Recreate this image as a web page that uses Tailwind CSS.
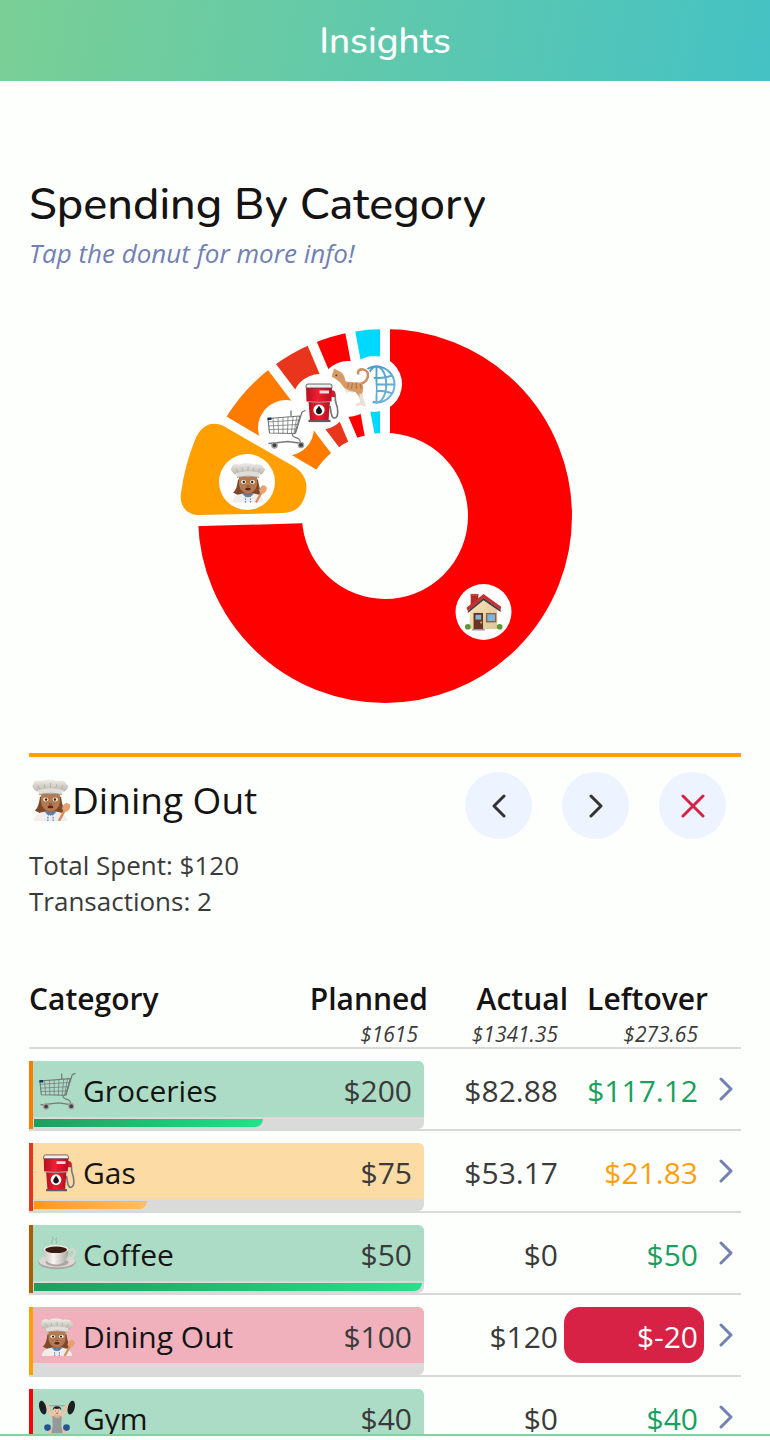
<!DOCTYPE html>
<html lang="en">
<head>
<meta charset="utf-8">
<meta name="viewport" content="width=device-width, initial-scale=1">
<title>Insights</title>
<script src="https://cdn.jsdelivr.net/npm/@tailwindcss/browser@4"></script>
</head>
<body class="flex h-screen flex-col bg-[#fdfffc] font-['Open_Sans',sans-serif] text-[#3a3a3a]">

<!-- Shared category pictures, each on a 40x40 grid -->
<svg class="absolute size-0" aria-hidden="true">
  <defs>
    <linearGradient id="gRed" x1="0" x2="1" y1="0" y2="0"><stop offset="0" stop-color="#b5101f"/><stop offset=".45" stop-color="#f01f31"/><stop offset="1" stop-color="#b5101f"/></linearGradient>
    <linearGradient id="gHat" x1="0" x2="0" y1="0" y2="1"><stop offset="0" stop-color="#f0eeea"/><stop offset="1" stop-color="#b9b5ae"/></linearGradient>
    <linearGradient id="gCup" x1="0" x2="1" y1="0" y2="0"><stop offset="0" stop-color="#c9c4be"/><stop offset=".4" stop-color="#f7f5f2"/><stop offset="1" stop-color="#aaa49d"/></linearGradient>
    <linearGradient id="gWall" x1="0" x2="1" y1="0" y2="1"><stop offset="0" stop-color="#f9e6b8"/><stop offset="1" stop-color="#dcc79a"/></linearGradient>
    <linearGradient id="gGlobe" gradientUnits="userSpaceOnUse" x1="0" x2="40" y1="0" y2="40"><stop offset="0" stop-color="#3f97c9"/><stop offset="1" stop-color="#76b8dc"/></linearGradient>
    <symbol id="cart" viewBox="0 0 40 40">
      <g fill="none" stroke="#77797a" stroke-linejoin="round" stroke-linecap="round">
        <path d="M2 9.500 34 7 29 24.500 3.500 24Z" stroke-width="1.200"/>
        <path d="M2.300 13 33 11M2.600 17 32 15.500M3 20.500 30.600 20M7 9.200 8 24M12 8.800 12.500 24M17 8.400V24.200M22 8 21.500 24.300M27 7.600 25.500 24.400M31 7.300 28 24.500" stroke-width=".8"/>
        <path d="M39 1.500 36 3 29.500 24M26.500 25C25 30 36 27 34 34M3 34.500 22 32.500 36 34.500M25 2V7" stroke-width="1.300"/>
      </g>
      <path d="M1.500 8.500h4v2.500h-4z" fill="#14365c"/>
      <g fill="#444" stroke="#a6a3a3" stroke-width="1.300"><circle cx="8.500" cy="36.300" r="2.700"/><circle cx="35" cy="36" r="2.700"/></g>
    </symbol>
    <symbol id="gas" viewBox="0 0 40 40">
      <path d="M33 8c4 2 1 7 3 12s3 14-1 15-4-7-5-12" fill="none" stroke="#77777b" stroke-width="1.700"/>
      <path d="M31 6.500 35 9v5h-4z" fill="#d21b2d"/>
      <path d="M8.500 18h21.500l-1.500 20H10z" fill="url(#gRed)"/>
      <path d="M6 4h26l-.5 14.500q-12 1-25 0z" fill="url(#gRed)"/>
      <path d="M6 3q0-2 2-2h22q2 0 2 2v2H6z" fill="#f3eef0" stroke="#4b4144" stroke-width=".8"/>
      <path d="M19.500 7.500H29v3h-9.500z" fill="#f6dbe0"/>
      <path d="M6.700 18.500q12 1.500 24.500 0" fill="none" stroke="#a3a0a3" stroke-width="1.200"/>
      <circle cx="19" cy="27" r="5.600" fill="#fff"/>
      <path d="M19 22.500c1 2.500 3.300 3.500 3 6-.5 3.500-5.500 3.500-6 0-.3-2.500 2-3.500 3-6Z" fill="#151515"/>
      <path d="M8.500 36.800h22v2.300h-22z" fill="#5f5b60"/>
    </symbol>
    <symbol id="chef" viewBox="0 0 40 40">
      <path d="M10 17C9 24 8 28 5 30q6 4 15 4t15-4c-3-2-4-6-5-13Z" fill="#7f4929"/>
      <path d="M4 40q1-8 11-9h10q10 1 11 9Z" fill="#efeeec"/>
      <path d="M16 26h8v6l-4 3-4-3z" fill="#9c6642"/>
      <path d="M11 14h18v8q-1 8-9 9-8-1-9-9Z" fill="#b27a53"/>
      <path d="M7 12C4 10 1 6 4 5 3 1 9 1 12 2c3-2 10-2 14 0 5-1 9 0 9 3 4 1 1 5-2 7Q20 8 7 12Z" fill="url(#gHat)"/>
      <path d="M10 10 8 6M15 9l-1-4M20 9V4M25 9l1-4M30 10l2-4" fill="none" stroke="#aaa69f" stroke-width=".7"/>
      <path d="M8 10.500Q20 7 32 10.500l-1 4.500Q20 12 9 15Z" fill="#e0ddd8"/>
      <path d="M9 15Q20 12 31 15" fill="none" stroke="#98938b" stroke-width=".8"/>
      <g fill="#fff4d8"><ellipse cx="15.500" cy="19.500" rx="2.500" ry="1.900"/><ellipse cx="24.500" cy="19.500" rx="2.500" ry="1.900"/></g>
      <g fill="#30221a"><circle cx="15.800" cy="19.500" r="1.200"/><circle cx="24.200" cy="19.500" r="1.200"/></g>
      <path d="M18.500 23.500q1.500 1 3 0" fill="none" stroke="#7d482e"/>
      <ellipse cx="20" cy="26.600" rx="2.800" ry="1.300" fill="#5d2323"/>
      <path d="M15 31l3 3 2-2 2 2 3-3" fill="none" stroke="#4d86cb" stroke-width="1.500"/>
      <path d="M17.500 36v4M22.500 36v4" stroke="#5d91cd" stroke-width="1.300" stroke-dasharray="1.500 1"/>
      <path d="m34 29-6 11" stroke="#d98e5c" stroke-width="2.400"/>
      <ellipse cx="35" cy="27" rx="3.400" ry="4.200" transform="rotate(35 35 27)" fill="#e8a271"/>
    </symbol>
    <symbol id="coffee" viewBox="0 0 40 40">
      <path d="M15 8c-3-3 3-4 0-7M19 8c3-3-3-4 1-6" fill="none" stroke="#9fb9ae" stroke-width="1.200"/>
      <ellipse cx="20" cy="27.500" rx="19.500" ry="7.500" fill="#aaa59f"/>
      <ellipse cx="20" cy="26.300" rx="19" ry="6.800" fill="#dcd8d3"/>
      <ellipse cx="20" cy="27.500" rx="12" ry="4.500" fill="#aca7a2"/>
      <path d="M31 15c8-3 9 1 7 5s-6 5-10 4" fill="none" stroke="#d9d5d0" stroke-width="2"/>
      <path d="M6 14c0 11 4 16 13 16s13-5 13-16Z" fill="url(#gCup)"/>
      <ellipse cx="19" cy="14" rx="13" ry="4.500" fill="#eeeae6"/>
      <ellipse cx="19" cy="14.500" rx="11.500" ry="3.500" fill="#3b1c12"/>
    </symbol>
    <symbol id="gym" viewBox="0 0 40 40">
      <path d="M5 6h30" stroke="#9b9b9b" stroke-width="1.200"/>
      <g fill="#1c1f21"><ellipse cx="5" cy="8" rx="3.600" ry="7.500" transform="rotate(-14 5 8)"/><ellipse cx="35" cy="8" rx="3.600" ry="7.500" transform="rotate(14 35 8)"/></g>
      <path d="M10 6l3 8 4 5M30 6l-3 8-4 5" fill="none" stroke="#efc2a5" stroke-width="3.200" stroke-linecap="round" stroke-linejoin="round"/>
      <path d="M14 29 11 38M26 29l3 9" fill="none" stroke="#edbea0" stroke-width="3.200"/>
      <path d="M15 17h10l-.5 10 1.500 8H14l1.500-8z" fill="#96999c"/>
      <path d="M17 15h6v3q-3 2-6 0z" fill="#e4b18f"/>
      <circle cx="20" cy="11.500" r="4.300" fill="#f2c9ae"/>
      <path d="M15.500 11q0-4.500 4.500-4.500t4.500 4.500l-1.500-2q-3 1-6 0Z" fill="#25201f"/>
      <path d="M18 11.500h.8M21.300 11.500h.8M18.800 14h2.500" stroke="#60392d" stroke-width=".8"/>
      <g fill="#245590"><circle cx="10" cy="29" r="3.500"/><circle cx="30" cy="29" r="3.500"/></g>
      <path d="M9 37h5M26 37h5" stroke="#e8e8e8" stroke-width="2.500"/>
    </symbol>
    <symbol id="house" viewBox="0 0 40 40">
      <path d="M6 1h8v16H6z" fill="#a92d29"/><path d="M6 1h8v2H6z" fill="#c7423a"/>
      <path d="M5 17 20 4l14 12v22H5z" fill="url(#gWall)"/>
      <path d="M1.500 15.500 19.500 1 38 14.500l-.5 3.500L19.500 5 3 19Z" fill="#c92e32"/>
      <path d="M3 19 19.500 5 37.500 18v2L19.500 7.500 3 21Z" fill="#43383a"/>
      <path d="M9 21h10v17H9z" fill="#6b3324"/><path d="M11 23h6v5h-6z" fill="#7fb9dd"/><circle cx="17" cy="31" r="1" fill="#e1c165"/>
      <path d="M22 21h11v10H22z" fill="#8a6647"/><path d="M23.500 22.500h8v7h-8z" fill="#78b4e4"/>
      <g fill="#5b9a34"><circle cx="3" cy="35.500" r="3"/><circle cx="36.500" cy="35.500" r="3"/></g>
      <path d="M8 38h13v1.500H7z" fill="#999"/>
    </symbol>
    <symbol id="cat" viewBox="0 0 40 40">
      <path d="M31 17C41 14 41 3 34 2c-4-.5-6 2-5 4" fill="none" stroke="#cf915f" stroke-width="2.600" stroke-linecap="round"/>
      <path d="M2 9C2 6 4 4 4 1l4 2 4 2c3 3 3 6 4 9 6 2 12 0 16 2 4 3 1 9 1 12l2 8-3 3-2-9-4-5-9-1-1 9-3 5-2-1 2-13c-3-2-4-6-5-9-3 0-6-1-6-5Z" fill="#d79b68"/>
      <path d="M11 17c1 4 1 6 4 8l-2 13 3 1 2-14 9 1c-6-2-12-3-16-9ZM30 27l1 8-5 3 1 2 6-2 1 2h3l-4-13Z" fill="#e9dfd5"/>
      <path d="M19 16l-1 5M23 16l-1 6M27 16v6M31 17l1 5" fill="none" stroke="#b2743f" stroke-width="1.200"/>
      <circle cx="6.500" cy="8" r=".9" fill="#333"/>
    </symbol>
    <symbol id="globe" viewBox="0 0 40 40">
      <g fill="none" stroke="url(#gGlobe)" stroke-width="2"><circle cx="20" cy="20" r="18.500"/><ellipse cx="20" cy="20" rx="10" ry="18.500"/><path d="M20 1.500v37M1.500 20h37.100M4 11q16 5 32 0M4 29q16-5 32 0"/></g>
    </symbol>
    <symbol id="chevron" viewBox="0 0 14 24"><path d="M2 2 12 12 2 22" fill="none" stroke="currentColor" stroke-width="3" stroke-linecap="round" stroke-linejoin="round"/></symbol>
  </defs>
</svg>

<header class="flex h-[81px] shrink-0 items-center justify-center bg-[linear-gradient(100deg,#7acf95,#45c2c4)]">
  <h1 class="font-[Nunito,'Open_Sans',sans-serif] text-[37px] leading-[48px] font-medium text-white">Insights</h1>
</header>

<main class="min-h-0 flex-1 overflow-y-auto px-[29px] pt-[96px] [scrollbar-width:none]">
  <h2 class="font-[Nunito,'Open_Sans',sans-serif] text-[45px] leading-[56px] font-medium text-[#151313]">Spending By Category</h2>
  <p class="text-[26px] leading-[40px] text-[#7280b4] italic">Tap the donut for more info!</p>

  <svg class="mx-auto mt-[43px] block h-[400px] w-[430px] max-w-full" viewBox="-215 -200 430 400" role="img" aria-label="Spending by category donut chart">
    <g fill="none" stroke-width="104" transform="rotate(-90)">
      <circle r="135" pathLength="360" stroke="#ff0000" stroke-dasharray="268.400 360"/>
      <circle r="135" pathLength="360" stroke="#ff7b00" stroke-dasharray="22.200 360" stroke-dashoffset="-300.600"/>
      <circle r="135" pathLength="360" stroke="#e8351b" stroke-dasharray="14.300 360" stroke-dashoffset="-322.800"/>
      <circle r="135" pathLength="360" stroke="#ff0000" stroke-dasharray="12.200 360" stroke-dashoffset="-337.100"/>
      <circle r="135" pathLength="360" stroke="#00d9ff" stroke-dasharray="10.700 360" stroke-dashoffset="-349.300"/>
    </g>
    <g stroke="#fdfffc" stroke-width="10">
      <path d="M0-75V-192"/>
      <path d="M0-75V-192" transform="rotate(268.400)"/>
      <path d="M0-75V-192" transform="rotate(300.600)"/>
      <path d="M0-75V-192" transform="rotate(322.800)"/>
      <path d="M0-75V-192" transform="rotate(337.100)"/>
      <path d="M0-75V-192" transform="rotate(349.300)"/>
    </g>
    <circle cx="98.500" cy="96" r="28" fill="#fff"/><use href="#house" x="80" y="77" width="38" height="38"/>
    <circle cx="-11" cy="-132" r="28" fill="#fff"/><use href="#globe" x="-28" y="-151" width="39" height="39"/>
    <circle cx="-37" cy="-127" r="28" fill="#fff"/><use href="#cat" x="-55" y="-149" width="39" height="40"/>
    <circle cx="-65" cy="-114" r="28" fill="#fff"/><circle cx="-99" cy="-88" r="28" fill="#fff"/>
    <use href="#gas" x="-85" y="-133" width="40" height="40"/><use href="#cart" x="-119" y="-107" width="40" height="40"/>
    <path fill="#ff9f00" d="M-158-88-92-50C-80-43-76-32-80-20-84-8-90-4-102-3L-186-1C-199-1-206-11-204-23Q-200-52-190-76C-184-91-172-97-158-88Z"/>
    <circle cx="-138" cy="-34" r="28" fill="#fff"/><use href="#chef" x="-157" y="-54" width="40" height="41"/>
  </svg>

  <section class="mt-[37px] border-t-4 border-[#ff9f00] pt-[15px]">
    <div class="flex items-start justify-between pr-[15px]">
      <h3 class="flex items-center text-[37px] leading-[56px] text-[#151313]"><svg class="h-[42px] w-[43px]" aria-hidden="true"><use href="#chef"/></svg>Dining Out</h3>
      <div class="flex gap-[30px]">
        <button type="button" aria-label="Previous" class="flex size-[67px] items-center justify-center rounded-full bg-[#eef4ff] text-[#333]"><svg class="h-6 w-[14px] rotate-180"><use href="#chevron"/></svg></button>
        <button type="button" aria-label="Next" class="flex size-[67px] items-center justify-center rounded-full bg-[#eef4ff] text-[#333]"><svg class="h-6 w-[14px]"><use href="#chevron"/></svg></button>
        <button type="button" aria-label="Close" class="flex size-[67px] items-center justify-center rounded-full bg-[#eef4ff] text-[#d72245]"><svg class="size-6" viewBox="0 0 24 24"><path d="M2 2 22 22M22 2 2 22" fill="none" stroke="currentColor" stroke-width="3" stroke-linecap="round"/></svg></button>
      </div>
    </div>
    <div class="mt-2 text-[26px] leading-[36px]"><p>Total Spent: $120</p><p>Transactions: 2</p></div>
  </section>

  <table class="mt-[62px] w-full table-fixed border-collapse text-right text-[30px] leading-[52px]">
    <colgroup><col><col class="w-[140px]"><col class="w-[140px]"><col class="w-[140px]"><col class="w-[37px]"></colgroup>
    <thead class="text-[30px] leading-[36px] text-[#151313]">
      <tr class="border-b-2 border-[#d9d9d9] align-top">
        <th scope="col" class="text-left font-semibold">Category</th>
        <th scope="col" class="font-semibold"><div class="-mr-1">Planned</div><div class="h-[30px] pr-[6px] text-[21px] leading-[34px] font-normal text-[#3a3a3a] italic">$1615</div></th>
        <th scope="col" class="font-semibold"><div class="-mr-1">Actual</div><div class="h-[30px] pr-[6px] text-[21px] leading-[34px] font-normal text-[#3a3a3a] italic">$1341.35</div></th>
        <th scope="col" class="font-semibold"><div class="-mr-1">Leftover</div><div class="h-[30px] pr-[6px] text-[21px] leading-[34px] font-normal text-[#3a3a3a] italic">$273.65</div></th>
        <td></td>
      </tr>
    </thead>
    <tbody>
      <tr class="border-b-2 border-[#d9d9d9] align-top">
        <td colspan="2" class="pt-3"><div class="overflow-hidden rounded-r-md border-l-4 border-[#ff7b00] bg-[#dadada]">
          <div class="flex items-center bg-[#acdcc5] pt-1 pr-3 pl-1"><svg class="mr-[6px] h-[38px] w-10" aria-hidden="true"><use href="#cart"/></svg><span class="flex-1 text-left text-[#151313]">Groceries</span><span>$200</span></div>
          <div class="h-3 pt-[2px] pr-[2px] pl-px"><div class="h-2 rounded-br-lg bg-linear-to-r from-[#1b9f5e] to-[#27e08a]" style="width:59%"></div></div></div></td>
        <td class="pt-4 pr-[6px]">$82.88</td>
        <td class="pt-4 pr-[6px] text-[#1b9f5e]">$117.12</td>
        <td class="pt-3"><a href="#groceries" aria-label="Groceries details" class="flex h-14 items-center justify-center text-[#7280b4]"><svg class="mr-[-6px] h-6 w-[14px]"><use href="#chevron"/></svg></a></td>
      </tr>
      <tr class="border-b-2 border-[#d9d9d9] align-top">
        <td colspan="2" class="pt-3"><div class="overflow-hidden rounded-r-md border-l-4 border-[#e8351b] bg-[#dadada]">
          <div class="flex items-center bg-[#fddba5] pt-1 pr-3 pl-1"><svg class="mr-[6px] h-[38px] w-10" aria-hidden="true"><use href="#gas"/></svg><span class="flex-1 text-left text-[#151313]">Gas</span><span>$75</span></div>
          <div class="h-3 pt-[2px] pr-[2px] pl-px"><div class="h-2 rounded-br-lg bg-linear-to-r from-[#ff9900] to-[#ffbe66]" style="width:29%"></div></div></div></td>
        <td class="pt-4 pr-[6px]">$53.17</td>
        <td class="pt-4 pr-[6px] text-[#ff9f0f]">$21.83</td>
        <td class="pt-3"><a href="#gas-details" aria-label="Gas details" class="flex h-14 items-center justify-center text-[#7280b4]"><svg class="mr-[-6px] h-6 w-[14px]"><use href="#chevron"/></svg></a></td>
      </tr>
      <tr class="border-b-2 border-[#d9d9d9] align-top">
        <td colspan="2" class="pt-3"><div class="overflow-hidden rounded-r-md border-l-4 border-[#a95f00] bg-[#dadada]">
          <div class="flex items-center bg-[#acdcc5] pt-1 pr-3 pl-1"><svg class="mr-[6px] h-[38px] w-10" aria-hidden="true"><use href="#coffee"/></svg><span class="flex-1 text-left text-[#151313]">Coffee</span><span>$50</span></div>
          <div class="h-3 pt-[2px] pr-[2px] pl-px"><div class="h-2 rounded-br-lg bg-linear-to-r from-[#1b9f5e] to-[#27e08a]" style="width:100%"></div></div></div></td>
        <td class="pt-4 pr-[6px]">$0</td>
        <td class="pt-4 pr-[6px] text-[#1b9f5e]">$50</td>
        <td class="pt-3"><a href="#coffee-details" aria-label="Coffee details" class="flex h-14 items-center justify-center text-[#7280b4]"><svg class="mr-[-6px] h-6 w-[14px]"><use href="#chevron"/></svg></a></td>
      </tr>
      <tr class="border-b-2 border-[#d9d9d9] align-top">
        <td colspan="2" class="pt-3"><div class="overflow-hidden rounded-r-md border-l-4 border-[#ff9f00] bg-[#dadada]">
          <div class="flex items-center bg-[#f0b1bd] pt-1 pr-3 pl-1"><svg class="mr-[6px] h-[38px] w-10" aria-hidden="true"><use href="#chef"/></svg><span class="flex-1 text-left text-[#151313]">Dining Out</span><span>$100</span></div>
          <div class="h-3"></div></div></td>
        <td class="pt-4 pr-[6px]">$120</td>
        <td class="pt-3"><div class="rounded-2xl bg-[#d72245] pt-1 pr-[6px] text-white">$-20</div></td>
        <td class="pt-3"><a href="#dining" aria-label="Dining Out details" class="flex h-14 items-center justify-center text-[#7280b4]"><svg class="mr-[-6px] h-6 w-[14px]"><use href="#chevron"/></svg></a></td>
      </tr>
      <tr class="border-b-2 border-[#d9d9d9] align-top">
        <td colspan="2" class="pt-3"><div class="overflow-hidden rounded-r-md border-l-4 border-[#ff0000] bg-[#dadada]">
          <div class="flex items-center bg-[#acdcc5] pt-1 pr-3 pl-1"><svg class="mr-[6px] h-[38px] w-10" aria-hidden="true"><use href="#gym"/></svg><span class="flex-1 text-left text-[#151313]">Gym</span><span>$40</span></div>
          <div class="h-3 pt-[2px] pr-[2px] pl-px"><div class="h-2 rounded-br-lg bg-linear-to-r from-[#1b9f5e] to-[#27e08a]" style="width:100%"></div></div></div></td>
        <td class="pt-4 pr-[6px]">$0</td>
        <td class="pt-4 pr-[6px] text-[#1b9f5e]">$40</td>
        <td class="pt-3"><a href="#gym-details" aria-label="Gym details" class="flex h-14 items-center justify-center text-[#7280b4]"><svg class="mr-[-6px] h-6 w-[14px]"><use href="#chevron"/></svg></a></td>
      </tr>
    </tbody>
  </table>
</main>
<footer class="h-[6px] shrink-0 border-t-2 border-[#83d2a0]"></footer>
</body>
</html>
